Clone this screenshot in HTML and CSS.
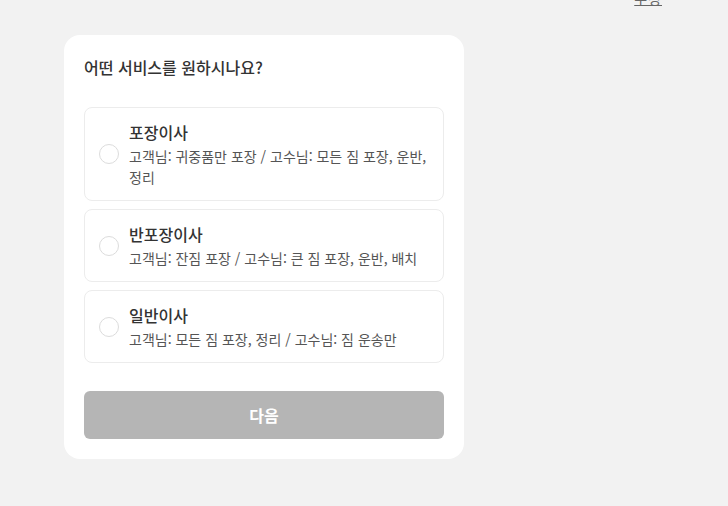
FILE: index.html
```html
<!DOCTYPE html>
<html lang="ko">
<head>
    <meta charset="UTF-8">
    <meta name="viewport" content="width=device-width, initial-scale=1.0">
    <title>서비스 선택</title>
    <link rel="stylesheet" href="styles.css">
</head>
<body>
    <div class="topbar">
        <a href="#" class="edit-link">수정</a>
    </div>

    <div class="page">
        <div class="card">
            <h2 class="question">어떤 서비스를 원하시나요?</h2>

            <div class="options">
                <label class="option">
                    <span class="radio"></span>
                    <span class="option-text">
                        <span class="option-title">포장이사</span>
                        <span class="option-desc">고객님: 귀중품만 포장 / 고수님: 모든 짐 포장, 운반, 정리</span>
                    </span>
                </label>
                <label class="option">
                    <span class="radio"></span>
                    <span class="option-text">
                        <span class="option-title">반포장이사</span>
                        <span class="option-desc">고객님: 잔짐 포장 / 고수님: 큰 짐 포장, 운반, 배치</span>
                    </span>
                </label>
                <label class="option">
                    <span class="radio"></span>
                    <span class="option-text">
                        <span class="option-title">일반이사</span>
                        <span class="option-desc">고객님: 모든 짐 포장, 정리 / 고수님: 짐 운송만</span>
                    </span>
                </label>
            </div>

            <button class="next-btn" disabled>다음</button>
        </div>
    </div>
</body>
</html>
```

FILE: styles.css
```css
* {
    margin: 0;
    padding: 0;
    box-sizing: border-box;
}

body {
    background-color: #f2f2f2;
    color: #222;
    font-family: "Noto Sans CJK KR", "Noto Sans", sans-serif;
    font-size: 14px;
    height: 100vh;
    overflow: hidden;
}

.topbar {
    display: flex;
    justify-content: flex-end;
    margin-top: -12px;
    height: 20px;
    padding-right: 66px;
}

.edit-link {
    color: #666;
    font-size: 14px;
    line-height: 20px;
    letter-spacing: 1px;
    text-decoration: underline;
}

.page {
    padding-left: 64px;
    margin-top: 27px;
}

.card {
    width: 400px;
    background-color: #fff;
    border-radius: 16px;
    padding: 20px;
}

.question {
    font-size: 16px;
    font-weight: 500;
    line-height: 24px;
    color: #333;
    margin-bottom: 28px;
}

.options {
    display: flex;
    flex-direction: column;
    gap: 8px;
}

.option {
    display: flex;
    align-items: center;
    gap: 10px;
    border: 1px solid #ececec;
    border-radius: 8px;
    padding: 12px 10px 12px 14px;
    cursor: pointer;
}

.radio {
    flex: none;
    width: 20px;
    height: 20px;
    border: 1.5px solid #dcdcdc;
    border-radius: 50%;
    background: #fff;
}

.option-text {
    display: flex;
    flex-direction: column;
    word-break: keep-all;
}

.option-title {
    font-size: 16px;
    font-weight: 500;
    line-height: 24px;
    color: #333;
    margin-bottom: 2px;
}

.option-desc {
    font-size: 14px;
    line-height: 21px;
    color: #555;
}

.next-btn {
    display: block;
    width: 100%;
    height: 48px;
    margin-top: 28px;
    border: none;
    border-radius: 6px;
    background-color: #b5b5b5;
    color: #fff;
    font-family: inherit;
    font-size: 16px;
    font-weight: 700;
}
```
